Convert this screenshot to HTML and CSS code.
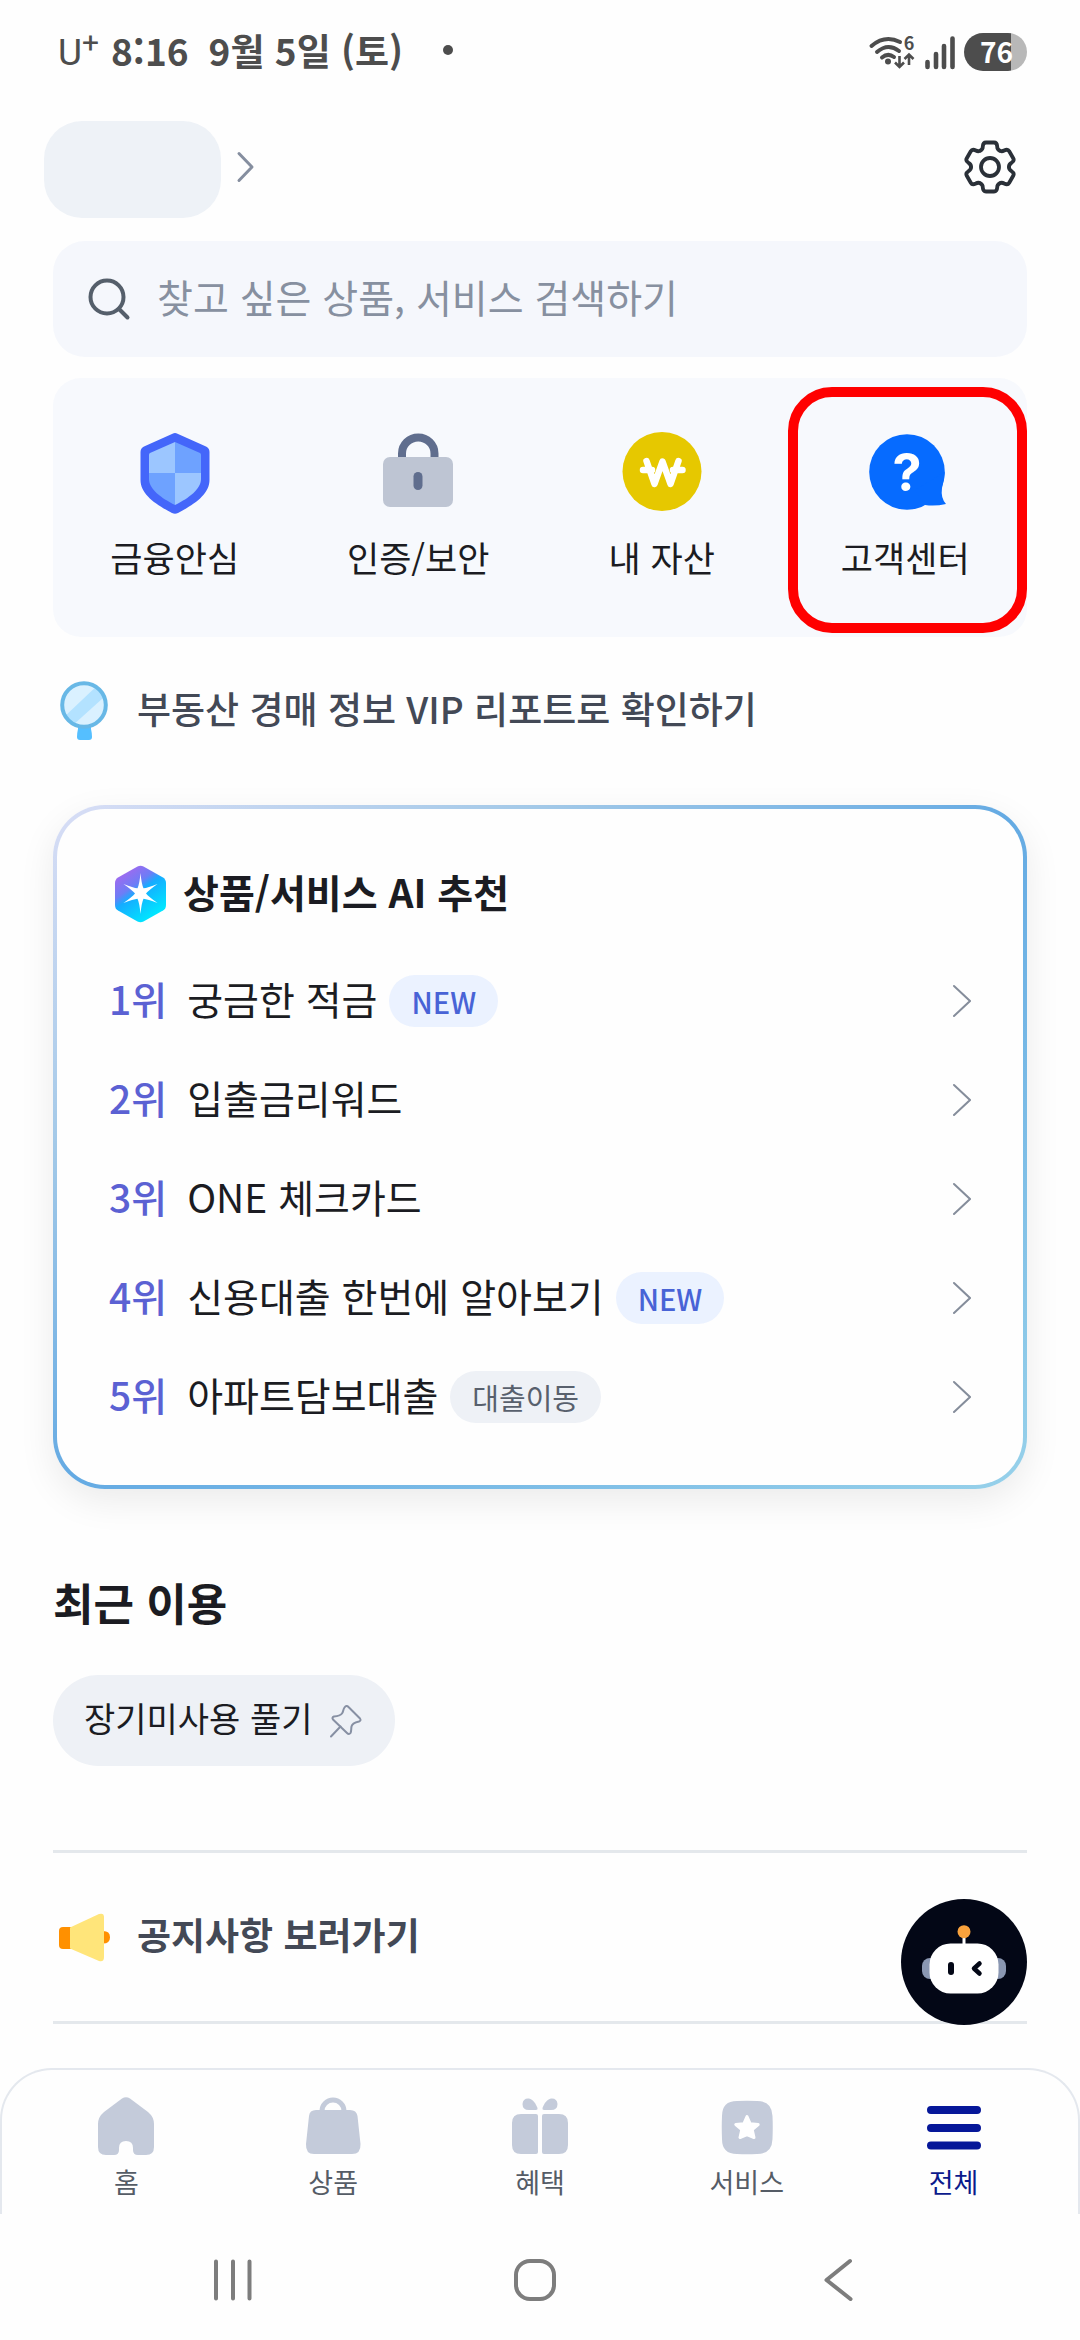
FILE: index.html
```html
<!DOCTYPE html>
<html lang="ko">
<head>
<meta charset="utf-8">
<meta name="viewport" content="width=device-width, initial-scale=1">
<title>전체</title>
<link rel="stylesheet" href="styles.css">
</head>
<body>
<div class="statusbar">
  <div class="status-left">
    <span class="carrier">U<span class="carrier-plus">+</span></span>
    <span>8:16</span>
    <span class="date">9월 5일 (토)</span>
    <span class="status-dot"></span>
  </div>
  <div class="status-right">
    <svg class="wifi" width="47" height="37" viewBox="0 0 47 37" aria-hidden="true">
      <g fill="none" stroke="#4d4d4d" stroke-width="4" stroke-linecap="round">
        <path d="M2.500 12Q16 .5 31 8"/><path d="M8 18Q19 8.500 30 17"/><path d="M13 23.500Q19 18.500 25 23"/>
      </g>
      <circle cx="19" cy="27.500" r="3" fill="#4d4d4d"/>
      <g fill="none" stroke="#4d4d4d" stroke-width="2.600"><path d="M30.500 22v10M26 28.500l4.500 4.500 4.500-4.500M40 31V21M35.500 25l4.500-4.500 4.500 4.500"/></g>
      <text class="wifi-gen" x="40" y="16" text-anchor="middle">6</text>
    </svg>
    <svg width="32" height="37" viewBox="0 0 32 37" aria-hidden="true">
      <path d="M3.500 28v5M12 20v13M20 12v21M28.500 4.500V33" fill="none" stroke="#4d4d4d" stroke-width="4.600" stroke-linecap="round"/>
    </svg>
    <span class="battery">76</span>
  </div>
</div>

<main class="page">
  <header class="profile">
    <a class="profile-link" href="#" aria-label="내 정보">
      <span class="profile-name"></span>
      <svg width="20" height="32" viewBox="0 0 20 32" aria-hidden="true"><path d="M3 2.500L16 16 3 29.500" fill="none" stroke="#858e9f" stroke-width="3" stroke-linecap="round" stroke-linejoin="round"/></svg>
    </a>
    <button class="settings" type="button" aria-label="설정">
      <svg width="54" height="54" viewBox="-27 -27 54 54" aria-hidden="true">
        <defs><path id="tooth" d="M-9.500 -16.500Q-7.200 -17.500 -7.200 -20.500Q-7 -24.500 -4 -24.500H4Q7 -24.500 7.200 -20.500Q7.200 -17.500 9.500 -16.500"/></defs>
        <g fill="none" stroke="#2a3038" stroke-width="3.800" stroke-linecap="round">
          <use href="#tooth"/><use href="#tooth" transform="rotate(60)"/><use href="#tooth" transform="rotate(120)"/><use href="#tooth" transform="rotate(180)"/><use href="#tooth" transform="rotate(240)"/><use href="#tooth" transform="rotate(300)"/>
          <circle r="9"/>
        </g>
      </svg>
    </button>
  </header>

  <label class="search">
    <svg width="44" height="44" viewBox="0 0 44 44" aria-hidden="true"><g fill="none" stroke="#555f6b" stroke-width="4" stroke-linecap="round"><circle cx="20" cy="20" r="16.500"/><path d="M32 32l8.500 8.500"/></g></svg>
    <input class="search-input" type="search" placeholder="찾고 싶은 상품, 서비스 검색하기" aria-label="검색">
  </label>

  <nav class="quick" aria-label="바로가기">
    <a class="quick-item" href="#">
      <svg width="84" height="84" viewBox="0 0 84 84" aria-hidden="true">
        <path d="M39.500 3.700Q42 2.400 44.500 3.700L73 16.500Q76.500 18.200 76.500 22V50C76.500 64 62 74 45 83Q42 84.500 39 83C22 74 7.500 64 7.500 50V22Q7.500 18.200 11 16.500Z" fill="#4466fa"/>
        <path d="M42 12V43H16V24.500Q16 23.500 17 23Z" fill="#9cc6ff"/>
        <path d="M42 12V43H68V24.500Q68 23.500 67 23Z" fill="#6ea2ff"/>
        <path d="M16 43H42V75C28 68 16 59 16 49Z" fill="#6ea2ff"/>
        <path d="M68 43H42V75C56 68 68 59 68 49Z" fill="#9cc6ff"/>
      </svg>
      <span>금융안심</span>
    </a>
    <a class="quick-item" href="#">
      <svg width="84" height="84" viewBox="0 0 84 84" aria-hidden="true">
        <path d="M26 29V23.500a16.250 16 0 0 1 32.500 0V29" fill="none" stroke="#606e8e" stroke-width="8"/>
        <rect x="7" y="27" width="70" height="50" rx="7" fill="#bec5d3"/>
        <rect x="37.500" y="42" width="9" height="18" rx="4.500" fill="#606e8e"/>
      </svg>
      <span>인증/보안</span>
    </a>
    <a class="quick-item" href="#">
      <svg width="84" height="84" viewBox="0 0 84 84" aria-hidden="true">
        <circle cx="42" cy="41.500" r="39.500" fill="#e6c800"/>
        <path d="M26.500 31L34.500 54 42.500 31.500 50.500 54 58.500 31M23 40h9M53 40h9.500" fill="none" stroke="#fff" stroke-width="6.500" stroke-linecap="round" stroke-linejoin="round"/>
      </svg>
      <span>내 자산</span>
    </a>
    <a class="quick-item" href="#">
      <svg width="84" height="84" viewBox="-2 0 84 84" aria-hidden="true">
        <circle cx="42" cy="42" r="37.800" fill="#066bff"/>
        <path d="M79.800 42Q79.500 49 77 58 75.500 68 81 74 70 76.500 60 75L50 60Z" fill="#066bff"/>
        <text class="help-mark" x="42" y="61" text-anchor="middle">?</text>
      </svg>
      <span>고객센터</span>
      <span class="focus-frame"></span>
    </a>
  </nav>

  <a class="promo" href="#">
    <svg width="64" height="60" viewBox="0 0 64 60" aria-hidden="true">
      <defs><clipPath id="glass"><circle cx="31" cy="24" r="21"/></clipPath></defs>
      <path d="M25 44H38V48Q39 52 39 56 39 59 36 59H27Q24 59 24 56 24 52 25 48Z" fill="#55bfff"/>
      <circle cx="31" cy="24" r="21.800" fill="#daf1ff"/>
      <path d="M9 38L48 1 60 8 19 45Z" fill="#b3e2ff" clip-path="url(#glass)"/>
      <circle cx="31" cy="24" r="21.800" fill="none" stroke="#68b8e6" stroke-width="4"/>
    </svg>
    <span class="row-text">부동산 경매 정보 VIP 리포트로 확인하기</span>
  </a>

  <section class="card">
    <h2 class="card-title">
      <svg width="58" height="58" viewBox="0 0 58 58" aria-hidden="true">
        <defs><linearGradient id="hex" x1="0.100" y1="0.100" x2="0.650" y2="0.950"><stop offset="0" stop-color="#a767ee"/><stop offset=".35" stop-color="#6d7df6"/><stop offset=".5" stop-color="#16acff"/><stop offset="1" stop-color="#00e6ff"/></linearGradient></defs>
        <path d="M28.500 1.500Q31.500 0 34.500 1.500L54 12.500Q57 14.500 57 18V40Q57 43.500 54 45.500L34.500 56.500Q31.500 58 28.500 56.500L9 45.500Q6 43.500 6 40V18Q6 14.500 9 12.500Z" fill="url(#hex)"/>
        <path d="M31.500 8Q32.500 19 34.500 23.300 38.500 23 48.500 19 40 25 37 28.500 40 32 48.500 38 38.500 34 34.500 33.700 32.500 38 31.500 49 30.500 38 28.500 33.700 24.500 34 14.500 38 23 32 26 28.500 23 25 14.500 19 24.500 23 28.500 23.300 30.500 19 31.500 8Z" fill="#fff"/>
      </svg>
      <span class="row-text">상품/서비스 AI 추천</span>
    </h2>
    <ol class="rank-list">
      <li><a class="rank-row" href="#"><span class="rank row-text">1위</span><span class="rank-name row-text">궁금한 적금</span><span class="badge">NEW</span><svg class="chevron" width="20" height="36" viewBox="0 0 20 36" aria-hidden="true"><path d="M3 3L19 18 3 33"/></svg></a></li>
      <li><a class="rank-row" href="#"><span class="rank row-text">2위</span><span class="rank-name row-text">입출금리워드</span><svg class="chevron" width="20" height="36" viewBox="0 0 20 36" aria-hidden="true"><path d="M3 3L19 18 3 33"/></svg></a></li>
      <li><a class="rank-row" href="#"><span class="rank row-text">3위</span><span class="rank-name row-text">ONE 체크카드</span><svg class="chevron" width="20" height="36" viewBox="0 0 20 36" aria-hidden="true"><path d="M3 3L19 18 3 33"/></svg></a></li>
      <li><a class="rank-row" href="#"><span class="rank row-text">4위</span><span class="rank-name row-text">신용대출 한번에 알아보기</span><span class="badge">NEW</span><svg class="chevron" width="20" height="36" viewBox="0 0 20 36" aria-hidden="true"><path d="M3 3L19 18 3 33"/></svg></a></li>
      <li><a class="rank-row" href="#"><span class="rank row-text">5위</span><span class="rank-name row-text">아파트담보대출</span><span class="badge badge-gray">대출이동</span><svg class="chevron" width="20" height="36" viewBox="0 0 20 36" aria-hidden="true"><path d="M3 3L19 18 3 33"/></svg></a></li>
    </ol>
  </section>

  <section class="recent">
    <h2 class="recent-title">최근 이용</h2>
    <button class="chip" type="button">
      <span class="row-text">장기미사용 풀기</span>
      <svg width="32" height="34" viewBox="0 0 32 34" aria-hidden="true"><g fill="none" stroke="#8790a3" stroke-width="2" stroke-linecap="round" stroke-linejoin="round"><path d="M14.500 3.500Q16.500 .8 18.500 3L30 14.500Q31.500 16.500 29 17.500C25.500 18.300 22 19.500 21.500 22.500 21 25.500 21.500 27 20.500 29Q19 31 17 29L3 15.500Q1.500 13.500 4 12.500C7 12.300 10.500 11.500 12 9.500 13.500 7.500 13 5.500 14.500 3.500Z"/><path d="M10.500 22.500L1 32.500"/></g></svg>
    </button>
  </section>

  <section class="notice">
    <a class="notice-link" href="#">
      <svg width="64" height="60" viewBox="0 0 64 60" aria-hidden="true">
        <path d="M50 24Q57 24 57 30.200 57 36.500 50 36.500Z" fill="#ff9000"/>
        <path d="M18 20H10Q6 20 6 24V38Q6 42 10 42H18Z" fill="#ff9000"/>
        <path d="M17 20.500L46 7Q51 5.500 51 10V50Q51 55.500 46 54L17 41.500Z" fill="#ffe57a"/>
      </svg>
      <span class="row-text">공지사항 보러가기</span>
    </a>
    <button class="chatbot" type="button" aria-label="챗봇">
      <svg width="126" height="126" viewBox="0 0 126 126" aria-hidden="true">
        <circle cx="63" cy="63" r="63" fill="#030716"/>
        <rect x="21" y="59" width="84" height="21" rx="8" fill="#8a97b2"/>
        <path d="M63 36V46" stroke="#fff" stroke-width="3"/>
        <circle cx="63" cy="32.700" r="6.500" fill="#f9a23d"/>
        <rect x="28.500" y="44.500" width="69" height="50" rx="21" fill="#fff"/>
        <rect x="47" y="63" width="6" height="13" rx="3" fill="#030716"/>
        <path d="M78.500 64.500L73 69.500 78.500 74.500" fill="none" stroke="#030716" stroke-width="4.500" stroke-linecap="round" stroke-linejoin="round"/>
      </svg>
    </button>
  </section>
</main>

<nav class="tabbar" aria-label="메뉴">
  <a class="tab" href="#">
    <svg width="60" height="60" viewBox="0 0 60 60" aria-hidden="true"><path d="M26 2.500Q30 0 34 2.500L52 16Q58 21 58 28V51Q58 59 50 59H42Q37 59 37 54V52Q37 45 30 45 23 45 23 52V54Q23 59 18 59H10Q2 59 2 51V28Q2 21 8 16Z"/></svg>
    홈
  </a>
  <a class="tab" href="#">
    <svg width="60" height="60" viewBox="0 0 60 60" aria-hidden="true"><path d="M13 14H47Q53.500 14 54.500 20L57.500 48Q58 58 49 58H11Q2.500 58 3 48L6 20Q6.500 14 13 14Z"/><path d="M19 16V15a11 11 0 0 1 22 0V16" fill="none" stroke="#c4cbda" stroke-width="5"/></svg>
    상품
  </a>
  <a class="tab" href="#">
    <svg width="60" height="60" viewBox="0 0 60 60" aria-hidden="true"><path d="M11 18H26Q28 18 28 20V56Q28 58 26 58H11Q2 58 2 49V27Q2 18 11 18ZM49 18H34Q32 18 32 20V56Q32 58 34 58H49Q58 58 58 49V27Q58 18 49 18ZM26 14H19Q12.500 14 12.500 8 13 2 19 2.500C23 3 26 8 27.500 12Q28 14 26 14ZM34 14H41Q47.500 14 47.500 8 47 2 41 2.500C37 3 34 8 32.500 12Q32 14 34 14Z"/></svg>
    혜택
  </a>
  <a class="tab" href="#">
    <svg width="60" height="60" viewBox="0 0 60 60" aria-hidden="true"><path d="M20 5Q30 4.500 40 5 55 5 55.500 20 56 31 55.500 43 55 58 40 58 30 58.500 20 58 5 58 5 43 4.500 31 5 20 5 5 20 5Z"/><path d="M30 20.500L33.200 27.800 41.200 28.500 35.200 33.600 37 41.500 30 38.500 23 41.500 24.800 33.600 18.800 28.500 26.800 27.800Z" fill="#fff" stroke="#fff" stroke-width="3" stroke-linejoin="round"/></svg>
    서비스
  </a>
  <a class="tab tab-active" href="#" aria-current="page">
    <svg width="60" height="60" viewBox="0 0 60 60" aria-hidden="true"><path d="M7 14H53M7 32H53M7 49.500H53" stroke="#061799" stroke-width="8" stroke-linecap="round"/></svg>
    전체
  </a>
</nav>

<div class="sysnav">
  <button type="button" aria-label="최근 앱"><svg width="44" height="44" viewBox="0 0 44 44"><path d="M5 3.500V40.500M22 3.500V40.500M38.500 3.500V40.500"/></svg></button>
  <button type="button" aria-label="홈 화면"><svg width="44" height="44" viewBox="0 0 44 44"><rect x="3" y="3" width="38" height="38" rx="14"/></svg></button>
  <button type="button" aria-label="뒤로"><svg width="44" height="44" viewBox="0 0 44 44"><path d="M34 3L10.500 22 34.500 41"/></svg></button>
</div>
</body>
</html>
```
FILE: styles.css
```css
* {
  box-sizing: border-box;
}

body {
  margin: 0;
  min-height: 100vh;
  display: flex;
  flex-direction: column;
  background: #fefefe;
  color: #1b1c22;
  font-family: "Noto Sans CJK KR", "Noto Sans", sans-serif;
}

a {
  color: inherit;
  text-decoration: none;
}

button {
  margin: 0;
  padding: 0;
  border: 0;
  background: none;
  color: inherit;
  font: inherit;
}

svg {
  display: block;
  flex: none;
}

h2,
ol {
  margin: 0;
  padding: 0;
}

ol {
  list-style: none;
}

/* Hangul sits low in its line box; this centres it beside icons */
.row-text {
  padding-bottom: 6px;
}

/* Status bar */
.statusbar {
  display: flex;
  justify-content: space-between;
  align-items: center;
  height: 100px;
  padding: 0 53px 0 58px;
  color: #4d4d4d;
  font-size: 37px;
  font-weight: 700;
  line-height: 56px;
}

.status-left,
.status-right {
  display: flex;
  align-items: center;
}

.status-left {
  gap: 12px;
}

.status-right {
  gap: 8px;
  padding-top: 4px;
}

.carrier {
  display: flex;
  padding-top: 6px;
  font-family: Roboto, sans-serif;
  font-weight: 400;
}

.carrier-plus {
  font-size: 30px;
  line-height: 36px;
}

.date {
  margin-left: 8px;
}

.status-dot {
  width: 10px;
  height: 10px;
  margin-left: 28px;
  border-radius: 50%;
  background: #4d4d4d;
}

.wifi {
  overflow: visible;
}

.wifi-gen {
  fill: #4d4d4d;
  font-size: 18px;
  font-weight: 700;
}

.battery {
  width: 63px;
  height: 38px;
  padding-left: 2px;
  border-radius: 19px;
  background: linear-gradient(to right, #4d4d4d 75%, #b8b8b8 75%);
  color: #fff;
  font-size: 28px;
  line-height: 36px;
  text-align: center;
}

/* Page content */
.page {
  flex: 1;
  padding: 21px 53px 44px;
}

.profile {
  display: flex;
  justify-content: space-between;
  align-items: center;
  margin: 0 10px 23px -9px;
}

.profile-link {
  display: flex;
  align-items: center;
  gap: 15px;
}

.profile svg {
  margin-bottom: 5px;
}

.profile-name {
  width: 177px;
  height: 97px;
  border-radius: 38px;
  background: #eef2f7;
}

.search {
  display: flex;
  align-items: center;
  gap: 26px;
  height: 116px;
  padding: 0 36px 0 34px;
  border-radius: 32px;
  background: #f5f7fc;
}

.search-input {
  flex: 1;
  min-width: 0;
  padding: 0 0 7px;
  border: 0;
  outline: 0;
  background: none;
  color: #1b1c22;
  font-family: inherit;
  font-size: 39px;
  line-height: 56px;
}

.search-input::placeholder {
  color: #8790a0;
}

.quick {
  display: grid;
  grid-template-columns: repeat(4, 1fr);
  margin-top: 21px;
  border-radius: 28px;
  background: #f7f9fd;
}

.quick-item {
  position: relative;
  display: flex;
  flex-direction: column;
  align-items: center;
  gap: 19px;
  padding: 52px 0 56px;
  font-size: 35px;
  line-height: 48px;
}

.focus-frame {
  position: absolute;
  inset: 9px 0 4px 4px;
  border: 10px solid #ff0000;
  border-radius: 44px;
}

.help-mark {
  fill: #fff;
  font-family: Inter, sans-serif;
  font-size: 52px;
  font-weight: 700;
}

.promo {
  display: flex;
  align-items: center;
  gap: 20px;
  height: 60px;
  margin-top: 44px;
  color: #434956;
  font-size: 37px;
  font-weight: 500;
  line-height: 56px;
}

/* AI recommendation card */
.card {
  margin-top: 64px;
  padding: 56px 52px 39px;
  border: 4px solid transparent;
  border-radius: 52px;
  background:
    linear-gradient(#fefefe, #fefefe) padding-box,
    linear-gradient(to bottom right, #d9def6, #a3c9e8 25%, #64aae3 50%, #97d1ea) border-box;
  box-shadow: 0 12px 36px rgba(0, 0, 0, 0.08);
}

.card-title {
  display: flex;
  align-items: center;
  gap: 16px;
  height: 58px;
  margin-bottom: 28px;
  font-size: 39px;
  font-weight: 700;
  line-height: 56px;
}

.rank-row {
  display: flex;
  align-items: center;
  height: 99px;
  font-size: 39px;
  line-height: 56px;
}

.rank {
  margin-right: 20px;
  color: #5b61d3;
  font-weight: 500;
}

.badge {
  margin-left: 12px;
  padding: 0 22px;
  border-radius: 26px;
  background: #ebf2ff;
  color: #4863d6;
  font-size: 29px;
  font-weight: 500;
  line-height: 52px;
}

.badge-gray {
  background: #eef1f6;
  color: #58606d;
  font-weight: 400;
}

.chevron {
  margin-left: auto;
  fill: none;
  stroke: #858d9b;
  stroke-width: 2;
  stroke-linecap: round;
}

/* Recent */
.recent-title {
  margin: 83px 0 43px;
  font-size: 44px;
  font-weight: 700;
  line-height: 60px;
}

.chip {
  display: flex;
  align-items: center;
  gap: 18px;
  height: 91px;
  padding: 0 33px 0 31px;
  border-radius: 46px;
  background: #eef1f6;
  font-size: 34px;
  line-height: 48px;
}

/* Notice */
.notice {
  position: relative;
  margin-top: 84px;
  border-top: 3px solid #e4e8ec;
  border-bottom: 3px solid #e4e8ec;
}

.notice-link {
  display: flex;
  align-items: center;
  gap: 20px;
  height: 168px;
  color: #434956;
  font-size: 37px;
  font-weight: 700;
  line-height: 56px;
}

.chatbot {
  position: absolute;
  right: 0;
  bottom: -4px;
}

/* Bottom tabs */
.tabbar {
  display: grid;
  grid-template-columns: repeat(5, 1fr);
  padding: 26px 21px 14px;
  border: 2px solid #e4e8ee;
  border-bottom: 0;
  border-radius: 52px 52px 0 0;
}

.tab {
  display: flex;
  flex-direction: column;
  align-items: center;
  gap: 8px;
  color: #555c66;
  font-size: 27px;
  line-height: 36px;
  fill: #c4cbda;
}

.tab-active {
  color: #0b1a8c;
}

/* System navigation */
.sysnav {
  display: grid;
  grid-template-columns: repeat(3, 1fr);
  height: 126px;
  padding: 3px 91px 0 82px;
}

.sysnav button {
  display: flex;
  justify-content: center;
  align-items: flex-start;
  padding-top: 41px;
}

.sysnav svg {
  fill: none;
  stroke: #7d7d7d;
  stroke-width: 4;
  stroke-linecap: round;
  stroke-linejoin: round;
}
```
